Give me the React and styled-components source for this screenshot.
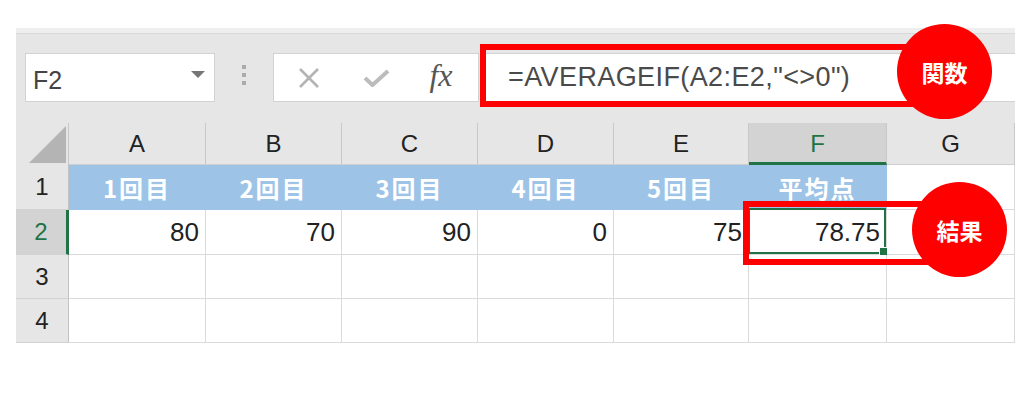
import React from "react";
import styled, { createGlobalStyle } from "styled-components";

const GlobalStyle = createGlobalStyle`
  html, body {
    margin: 0;
    padding: 0;
    background: #ffffff;
  }
  body {
    font-family: "Liberation Sans", "Noto Sans CJK JP", sans-serif;
  }
`;

const Page = styled.div`
  width: 1024px;
  height: 393px;
  padding: 28px 0 0 16px;
  box-sizing: border-box;
  overflow: hidden;
`;

const Sheet = styled.div`
  position: relative;
  width: 999px;
  background: #e6e6e6;
`;

const TopStrip = styled.div`
  height: 5px;
  background: #eeeeee;
  border-bottom: 1px solid #d9d9d9;
`;

const Toolbar = styled.div`
  height: 89px;
  display: flex;
  align-items: flex-start;
  padding: 19px 0 0 9px;
  box-sizing: border-box;
`;

const NameBox = styled.div`
  width: 190px;
  height: 49px;
  box-sizing: border-box;
  background: #ffffff;
  border: 1px solid #d2d2d2;
  display: flex;
  align-items: center;
  justify-content: space-between;
  padding: 5px 9px 0 7px;
  color: #444;
  font-size: 25px;
`;

const DropArrow = styled.span`
  width: 0;
  height: 0;
  border-left: 7px solid transparent;
  border-right: 7px solid transparent;
  border-top: 7px solid #767676;
  margin-bottom: 11px;
`;

const Grip = styled.div`
  width: 58px;
  height: 49px;
  display: flex;
  flex-direction: column;
  align-items: center;
  justify-content: center;
  gap: 4px;
  padding-bottom: 6px;
  box-sizing: border-box;
  & > span {
    width: 4px;
    height: 4px;
    background: #ababab;
  }
`;

const ButtonBox = styled.div`
  width: 206px;
  height: 49px;
  box-sizing: border-box;
  background: #ffffff;
  border: 1px solid #d2d2d2;
  display: grid;
  grid-template-columns: 70px 64px 1fr;
  align-items: center;
  justify-items: center;
`;

const FxLabel = styled.span`
  font-family: "Liberation Serif", serif;
  font-style: italic;
  font-size: 32px;
  color: #555;
  margin-right: 4px;
  margin-bottom: 4px;
`;

const FormulaBox = styled.div`
  flex: 1;
  height: 49px;
  margin-left: 1px;
  box-sizing: border-box;
  background: #ffffff;
  border-top: 1px solid #d2d2d2;
  border-bottom: 1px solid #d2d2d2;
  display: flex;
  align-items: center;
  padding-left: 28px;
  color: #4a4a4a;
  font-size: 27px;
  letter-spacing: 0.4px;
  white-space: nowrap;
`;

const Grid = styled.div`
  display: grid;
  grid-template-columns: 53px 137px 136px 136px 136px 135px 138px 1fr;
  grid-template-rows: 42px 45px 45px 44px 44px;
`;

const Corner = styled.div`
  border-right: 1px solid #c8c8c8;
  box-sizing: border-box;
  display: flex;
  align-items: flex-end;
  justify-content: flex-end;
  padding: 0 2px 2px 0;
`;

const ColHead = styled.div`
  box-sizing: border-box;
  display: flex;
  align-items: center;
  justify-content: center;
  font-size: 24px;
  color: ${({ $active }) => ($active ? "#217346" : "#222")};
  background: ${({ $active }) => ($active ? "#d3d3d3" : "#e6e6e6")};
  border-right: 1px solid #c8c8c8;
  border-bottom: ${({ $active }) => ($active ? "3px solid #217346" : "1px solid #cfcfcf")};
  padding-top: ${({ $active }) => ($active ? "2px" : "0")};
`;

const RowHead = styled.div`
  box-sizing: border-box;
  display: flex;
  align-items: center;
  justify-content: center;
  font-size: 24px;
  color: ${({ $active }) => ($active ? "#217346" : "#222")};
  background: ${({ $active }) => ($active ? "#d3d3d3" : "#e6e6e6")};
  border-bottom: 1px solid #d2d2d2;
  border-right: ${({ $active }) => ($active ? "3px solid #217346" : "1px solid #c2c2c2")};
`;

const Cell = styled.div`
  position: relative;
  box-sizing: border-box;
  display: flex;
  align-items: center;
  justify-content: ${({ $head }) => ($head ? "center" : "flex-end")};
  padding: 0 6px;
  background: ${({ $head }) => ($head ? "#9dc3e6" : "#ffffff")};
  border-right: 1px solid ${({ $head }) => ($head ? "#9dc3e6" : "#dadada")};
  border-bottom: 1px solid ${({ $head }) => ($head ? "#9dc3e6" : "#dadada")};
  color: ${({ $head }) => ($head ? "#ffffff" : "#222")};
  font-family: ${({ $head }) =>
    $head ? `"Noto Sans CJK JP", sans-serif` : `"Liberation Sans", sans-serif`};
  font-weight: ${({ $head }) => ($head ? 700 : 400)};
  font-size: ${({ $head }) => ($head ? "24px" : "26px")};
  letter-spacing: ${({ $head }) => ($head ? "2px" : "0")};
  white-space: nowrap;
`;

const Selection = styled.div`
  position: absolute;
  inset: -2px 0 0 -1px;
  border: 2px solid #217346;
  pointer-events: none;
  &::after {
    content: "";
    position: absolute;
    right: -4px;
    bottom: -4px;
    width: 7px;
    height: 7px;
    background: #217346;
    border: 1px solid #ffffff;
  }
`;

const RedFrame = styled.div`
  position: absolute;
  left: ${({ $x }) => $x}px;
  top: ${({ $y }) => $y}px;
  width: ${({ $w }) => $w}px;
  height: ${({ $h }) => $h}px;
  box-sizing: border-box;
  border: 6px solid #ff0000;
`;

const Badge = styled.div`
  position: absolute;
  left: ${({ $x }) => $x}px;
  top: ${({ $y }) => $y}px;
  width: 95px;
  height: 95px;
  border-radius: 50%;
  background: #ff0000;
  color: #ffffff;
  display: flex;
  align-items: center;
  justify-content: center;
  font-family: "Noto Sans CJK JP", sans-serif;
  font-weight: 700;
  font-size: 23px;
`;

const cols = ["A", "B", "C", "D", "E", "F", "G"];
const heads = ["1回目", "2回目", "3回目", "4回目", "5回目", "平均点", ""];
const scores = ["80", "70", "90", "0", "75", "78.75", ""];

const CancelIcon = () => (
  <svg width="22" height="20" viewBox="0 0 22 20">
    <path d="M2 1 L20 19 M20 1 L2 19" stroke="#b4b4b4" strokeWidth="2.6" fill="none" />
  </svg>
);

const EnterIcon = () => (
  <svg width="27" height="18" viewBox="0 0 27 18">
    <path d="M2 9 L9.5 16 L25 2" stroke="#bcbcbc" strokeWidth="4" fill="none" />
  </svg>
);

const SelectAll = () => (
  <svg width="37" height="37" viewBox="0 0 37 37">
    <polygon points="0,37 37,37 37,0" fill="#b4b4b4" />
  </svg>
);

export default function App() {
  return (
    <Page>
      <GlobalStyle />
      <Sheet>
        <TopStrip />
        <Toolbar>
          <NameBox>
            F2
            <DropArrow />
          </NameBox>
          <Grip>
            <span />
            <span />
            <span />
          </Grip>
          <ButtonBox>
            <CancelIcon />
            <EnterIcon />
            <FxLabel>fx</FxLabel>
          </ButtonBox>
          <FormulaBox>=AVERAGEIF(A2:E2,"&lt;&gt;0")</FormulaBox>
        </Toolbar>
        <Grid>
          <Corner>
            <SelectAll />
          </Corner>
          {cols.map((c) => (
            <ColHead key={c} $active={c === "F"}>
              {c}
            </ColHead>
          ))}
          {[1, 2, 3, 4].map((r) => (
            <React.Fragment key={r}>
              <RowHead $active={r === 2}>{r}</RowHead>
              {cols.map((c, i) => {
                const head = r === 1 && heads[i] !== "";
                return (
                  <Cell key={c} $head={head}>
                    {r === 1 ? heads[i] : r === 2 ? scores[i] : ""}
                    {r === 2 && c === "F" && <Selection />}
                  </Cell>
                );
              })}
            </React.Fragment>
          ))}
        </Grid>
        <RedFrame $x={464} $y={16} $w={450} $h={63} />
        <Badge $x={881} $y={-4}>関数</Badge>
        <RedFrame $x={727} $y={173} $w={210} $h={64} />
        <Badge $x={896} $y={154}>結果</Badge>
      </Sheet>
    </Page>
  );
}
